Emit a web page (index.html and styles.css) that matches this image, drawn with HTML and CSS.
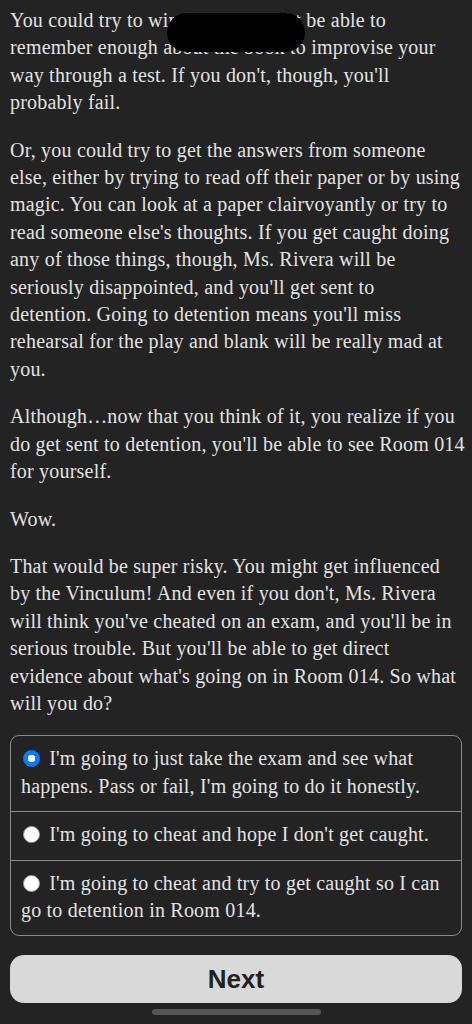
FILE: index.html
```html
<!DOCTYPE html>
<html>
<head>
  <link rel="stylesheet" href="styles.css">
</head>
<body>
  <div class="island"></div>

  <div class="story">
    <p>You could try to wing it. You might be able to<br>
      remember enough about the book to improvise your<br>
      way through a test. If you don't, though, you'll<br>
      probably fail.</p>
    <p>Or, you could try to get the answers from someone<br>
      else, either by trying to read off their paper or by using<br>
      magic. You can look at a paper clairvoyantly or try to<br>
      read someone else's thoughts. If you get caught doing<br>
      any of those things, though, Ms. Rivera will be<br>
      seriously disappointed, and you'll get sent to<br>
      detention. Going to detention means you'll miss<br>
      rehearsal for the play and blank will be really mad at<br>
      you.</p>
    <p>Although&hellip;now that you think of it, you realize if you<br>
      do get sent to detention, you'll be able to see Room 014<br>
      for yourself.</p>
    <p>Wow.</p>
    <p>That would be super risky. You might get influenced<br>
      by the Vinculum! And even if you don't, Ms. Rivera<br>
      will think you've cheated on an exam, and you'll be in<br>
      serious trouble. But you'll be able to get direct<br>
      evidence about what's going on in Room 014. So what<br>
      will you do?</p>
  </div>

  <div class="choices">
    <label class="choice">
      <input type="radio" name="choice" checked>
      I'm going to just take the exam and see what<br>
      happens. Pass or fail, I'm going to do it honestly.
    </label>
    <label class="choice">
      <input type="radio" name="choice">
      I'm going to cheat and hope I don't get caught.
    </label>
    <label class="choice">
      <input type="radio" name="choice">
      I'm going to cheat and try to get caught so I can<br>
      go to detention in Room 014.
    </label>
  </div>

  <button class="next">Next</button>

  <div class="home-bar"></div>
</body>
</html>
```

FILE: styles.css
```css
html, body {
  margin: 0;
  background-color: #232323;
}

body {
  padding: 7px 10px 0 10px;
  color: #e2e2e2;
  font-family: "Liberation Serif", serif;
  font-size: 20px;
  line-height: 27.4px;
  letter-spacing: 0.2px;
}

.story p {
  margin: 0 0 20px 0;
  white-space: nowrap;
}

.story p:last-child {
  margin-bottom: 18px;
}

.choices {
  border: 1px solid #8a8a8a;
  border-radius: 9px;
}

.choice {
  display: block;
  padding: 9px 10px 11px 10px;
  border-bottom: 1px solid #8a8a8a;
  white-space: nowrap;
}

.choice:last-child {
  border-bottom: none;
}

.choice input {
  appearance: none;
  -webkit-appearance: none;
  margin: 0 4px 0 2px;
  width: 17px;
  height: 17px;
  border: 1px solid #999;
  border-radius: 50%;
  background-color: #fff;
  vertical-align: -2px;
}

.choice input:checked {
  border-color: #0a7aff;
  background: radial-gradient(circle, #fff 0 3.5px, #0a7aff 4px);
}

.next {
  display: block;
  width: 100%;
  height: 48px;
  margin-top: 19px;
  border: none;
  border-radius: 14px;
  background-color: #d9d9d9;
  color: #222;
  font-family: "Liberation Sans", Arial, sans-serif;
  font-weight: bold;
  font-size: 26px;
  letter-spacing: 0;
}

.island {
  position: absolute;
  left: 167px;
  top: 13px;
  width: 138px;
  height: 39px;
  border-radius: 20px;
  background-color: #000;
}

.home-bar {
  position: absolute;
  left: 152px;
  top: 1009px;
  width: 169px;
  height: 6px;
  border-radius: 3px;
  background-color: #555;
}
```
